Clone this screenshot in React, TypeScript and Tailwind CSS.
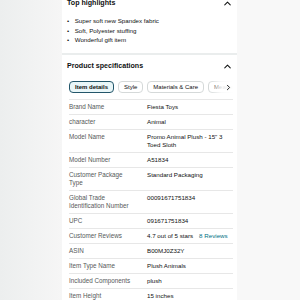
import React from 'react';
import { ChevronUp, ChevronRight } from 'lucide-react';

type Spec = { label: string; value: React.ReactNode };

const highlights = ['Super soft new Spandex fabric', 'Soft, Polyester stuffing', 'Wonderful gift item'];

const tabs = ['Item details', 'Style', 'Materials & Care', 'Measurements'];

const specs: Spec[] = [
  { label: 'Brand Name', value: 'Fiesta Toys' },
  { label: 'character', value: 'Animal' },
  { label: 'Model Name', value: 'Promo Animal Plush - 15" 3 Toed Sloth' },
  { label: 'Model Number', value: 'A51834' },
  { label: 'Customer Package Type', value: 'Standard Packaging' },
  { label: 'Global Trade Identification Number', value: '00091671751834' },
  { label: 'UPC', value: '091671751834' },
  {
    label: 'Customer Reviews',
    value: (
      <span>
        4.7 out of 5 stars<span className="ml-[6px] text-[#007185]">8 Reviews</span>
      </span>
    ),
  },
  { label: 'ASIN', value: 'B00MJ0Z32Y' },
  { label: 'Item Type Name', value: 'Plush Animals' },
  { label: 'Included Components', value: 'plush' },
  { label: 'Item Height', value: '15 inches' },
];

const SectionHeader = ({ title }: { title: string }) => (
  <div className="flex h-[9px] items-center justify-between">
    <h2 className="text-[7.1px] font-bold leading-[9px] text-[#0f1111]">{title}</h2>
    <ChevronUp size={11} strokeWidth={2.2} className="text-[#0f1111]" />
  </div>
);

export default function App() {
  return (
    <div className="flex h-[300px] w-[300px] overflow-hidden bg-[#f8f8f8] font-['Liberation_Sans',Arial,sans-serif]">
      <div className="w-[62px] shrink-0 bg-gradient-to-r from-[#eceeee] to-[#f6f6f6]" />

      <div className="w-[175px] shrink-0 bg-white">
        {/* Top highlights */}
        <section className="mt-[-1.5px] pl-[5px] pr-[4px]">
          <SectionHeader title="Top highlights" />
          <ul className="mt-[8.3px] text-[6.2px] leading-[9.8px] text-[#0f1111]">
            {highlights.map((h) => (
              <li key={h} className="flex">
                <span className="w-[7.7px] shrink-0">•</span>
                <span>{h}</span>
              </li>
            ))}
          </ul>
        </section>

        <div className="mt-[8.3px] h-[2px] bg-[#eaeded]" />

        {/* Product specifications */}
        <section className="mt-[6.5px] pl-[5px] pr-[4px]">
          <SectionHeader title="Product specifications" />

          <div className="relative ml-[2px] mt-[9.8px] overflow-hidden">
            <div className="flex gap-[4px]">
              {tabs.map((t, i) => (
                <div
                  key={t}
                  className={`flex h-[12.5px] shrink-0 items-center whitespace-nowrap rounded-[4px] px-[5px] text-[6px] text-[#0f1111] ${
                    i === 0
                      ? 'border-[1.5px] border-[#23566a] bg-[#e9f6f8] font-bold'
                      : 'border border-[#d5d9d9] bg-white'
                  }`}
                >
                  {t}
                </div>
              ))}
            </div>
            <div className="absolute right-0 top-0 flex h-full w-[24px] items-center justify-end bg-gradient-to-r from-white/0 via-white/85 to-white">
              <ChevronRight size={9} strokeWidth={2.4} className="text-[#0f1111]" />
            </div>
          </div>

          <div className="ml-[2px] mt-[6.2px] border-t border-[#e7e7e7]">
            {specs.map((s) => (
              <div key={s.label} className="flex border-b border-[#e7e7e7] py-[3px] leading-[8px]">
                <div className="w-[78px] shrink-0 pr-[12px] text-[6.3px] text-[#565959]">{s.label}</div>
                <div className="flex-1 pr-[2px] text-[6.2px] text-[#0f1111]">{s.value}</div>
              </div>
            ))}
          </div>
        </section>
      </div>

      <div className="flex-1 bg-[#f8f8f8]" />
    </div>
  );
}
